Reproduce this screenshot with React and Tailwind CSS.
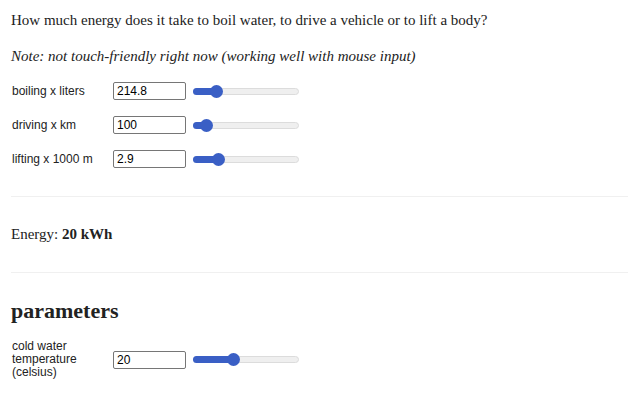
import React from 'react';

const serif = { fontFamily: '"Liberation Serif", serif' };
const sans = { fontFamily: '"Liberation Sans", Arial, sans-serif' };

const Slider = ({ pct }) => (
  <div className="w-[106px] h-[7px] rounded-full bg-[#efefef] border border-[#dcdcdc] flex items-center">
    <div className="h-[7px] rounded-l-full bg-[#3a5fc5] -ml-px" style={{ width: `${pct}%` }} />
    <div className="w-[13px] h-[13px] rounded-full bg-[#3a5fc5] shrink-0 -ml-[7px]" />
  </div>
);

const Row = ({ label, value, pct }) => (
  <div className="flex items-center" style={sans}>
    <div className="w-[101px] text-[12px] leading-[13px] text-[#222]">{label}</div>
    <div className="w-[73px] h-[18px] border border-[#767676] rounded-[2px] px-[3px] flex items-center text-[12px] text-black">
      {value}
    </div>
    <div className="ml-[7px]">
      <Slider pct={pct} />
    </div>
  </div>
);

export default function App() {
  return (
    <div className="w-[640px] h-[400px] bg-white px-[11px] text-[#222] overflow-hidden">
      <p className="pt-[10px] text-[15px] leading-[20px]" style={serif}>
        How much energy does it take to boil water, to drive a vehicle or to lift a body?
      </p>
      <p className="mt-[16px] text-[15px] leading-[20px] italic" style={serif}>
        Note: not touch-friendly right now (working well with mouse input)
      </p>
      <div className="mt-[16px] flex flex-col gap-[16px] pl-px">
        <Row label="boiling x liters" value="214.8" pct={23} />
        <Row label="driving x km" value="100" pct={13} />
        <Row label="lifting x 1000 m" value="2.9" pct={25} />
      </div>
      <div className="mt-[28px] h-px bg-[#f0f0f0] mr-px" />
      <p className="mt-[27px] text-[15px] leading-[20px]" style={serif}>
        Energy: <b>20 kWh</b>
      </p>
      <div className="mt-[28px] h-px bg-[#f0f0f0] mr-px" />
      <h2 className="mt-[25px] text-[22px] leading-[26px] font-bold" style={serif}>parameters</h2>
      <div className="mt-[16px] pl-px">
        <Row label={<>cold water<br />temperature<br />(celsius)</>} value="20" pct={39} />
      </div>
    </div>
  );
}
